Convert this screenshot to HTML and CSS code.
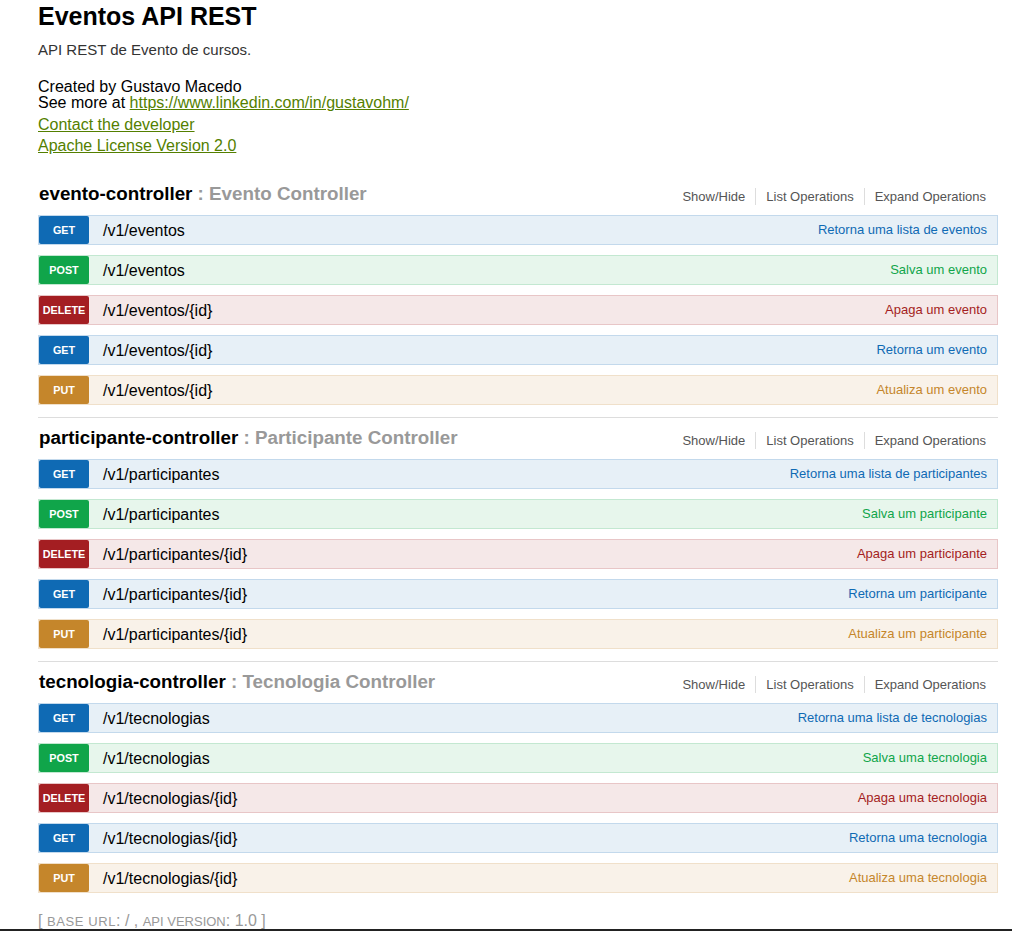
FILE: index.html
```html
<!DOCTYPE html>
<html lang="pt">
<head>
<meta charset="utf-8">
<title>Eventos API REST</title>
<link rel="stylesheet" href="styles.css">
</head>
<body>
<div class="wrap">
  <div class="info">
    <div class="info-title">Eventos API REST</div>
    <div class="info-description">API REST de Evento de cursos.</div>
    <div class="info-tos">Created by Gustavo Macedo<br>See more at <a href="#">https://www.linkedin.com/in/gustavohm/</a></div>
    <div class="info-link"><a href="#">Contact the developer</a></div>
    <div class="info-link"><a href="#">Apache License Version 2.0</a></div>
  </div>

  <ul class="resources">
    <li class="resource">
      <div class="res-heading">
        <h2><span class="res-name">evento-controller</span> : Evento Controller</h2>
        <ul class="options">
          <li>Show/Hide</li>
          <li>List Operations</li>
          <li>Expand Operations</li>
        </ul>
      </div>
      <ul class="endpoints">
        <li class="op get"><span class="method">GET</span><span class="path">/v1/eventos</span><span class="summary">Retorna uma lista de eventos</span></li>
        <li class="op post"><span class="method">POST</span><span class="path">/v1/eventos</span><span class="summary">Salva um evento</span></li>
        <li class="op delete"><span class="method">DELETE</span><span class="path">/v1/eventos/{id}</span><span class="summary">Apaga um evento</span></li>
        <li class="op get"><span class="method">GET</span><span class="path">/v1/eventos/{id}</span><span class="summary">Retorna um evento</span></li>
        <li class="op put"><span class="method">PUT</span><span class="path">/v1/eventos/{id}</span><span class="summary">Atualiza um evento</span></li>
      </ul>
    </li>
    <li class="resource">
      <div class="res-heading">
        <h2><span class="res-name">participante-controller</span> : Participante Controller</h2>
        <ul class="options">
          <li>Show/Hide</li>
          <li>List Operations</li>
          <li>Expand Operations</li>
        </ul>
      </div>
      <ul class="endpoints">
        <li class="op get"><span class="method">GET</span><span class="path">/v1/participantes</span><span class="summary">Retorna uma lista de participantes</span></li>
        <li class="op post"><span class="method">POST</span><span class="path">/v1/participantes</span><span class="summary">Salva um participante</span></li>
        <li class="op delete"><span class="method">DELETE</span><span class="path">/v1/participantes/{id}</span><span class="summary">Apaga um participante</span></li>
        <li class="op get"><span class="method">GET</span><span class="path">/v1/participantes/{id}</span><span class="summary">Retorna um participante</span></li>
        <li class="op put"><span class="method">PUT</span><span class="path">/v1/participantes/{id}</span><span class="summary">Atualiza um participante</span></li>
      </ul>
    </li>
    <li class="resource last">
      <div class="res-heading">
        <h2><span class="res-name">tecnologia-controller</span> : Tecnologia Controller</h2>
        <ul class="options">
          <li>Show/Hide</li>
          <li>List Operations</li>
          <li>Expand Operations</li>
        </ul>
      </div>
      <ul class="endpoints">
        <li class="op get"><span class="method">GET</span><span class="path">/v1/tecnologias</span><span class="summary">Retorna uma lista de tecnologias</span></li>
        <li class="op post"><span class="method">POST</span><span class="path">/v1/tecnologias</span><span class="summary">Salva uma tecnologia</span></li>
        <li class="op delete"><span class="method">DELETE</span><span class="path">/v1/tecnologias/{id}</span><span class="summary">Apaga uma tecnologia</span></li>
        <li class="op get"><span class="method">GET</span><span class="path">/v1/tecnologias/{id}</span><span class="summary">Retorna uma tecnologia</span></li>
        <li class="op put"><span class="method">PUT</span><span class="path">/v1/tecnologias/{id}</span><span class="summary">Atualiza uma tecnologia</span></li>
      </ul>
    </li>
  </ul>

  <div class="footer">[ <span class="sc sc-base">base url</span>: / , <span class="sc">api version</span>: 1.0 ]</div>
</div>
<div class="bottom-bar"></div>
</body>
</html>
```
FILE: styles.css
```css
html, body {
  margin: 0;
  padding: 0;
  background: #fff;
}
body {
  font-family: "Liberation Sans", Arial, sans-serif;
  color: #000;
}
ul {
  list-style: none;
  margin: 0;
  padding: 0;
}
.wrap {
  width: 960px;
  margin-left: 38px;
}

/* info */
.info-title {
  font-size: 25px;
  font-weight: bold;
  line-height: 33px;
}
.info-description {
  margin-top: 9px;
  font-size: 15px;
  line-height: 15px;
  color: #333;
}
.info-tos {
  margin-top: 22px;
  font-size: 16px;
  line-height: 16px;
}
.info-link {
  margin-top: 3px;
  font-size: 16px;
  line-height: 21px;
}
.info-link + .info-link {
  margin-top: 0;
}
.info a {
  color: #547f00;
  text-decoration: underline;
}
.resources {
  margin-top: 18px;
}

/* resources */
.resource {
  padding-bottom: 12px;
  border-bottom: 1px solid #ddd;
}
.resource.last {
  border-bottom: none;
}
.res-heading {
  display: flex;
  align-items: flex-start;
}
.res-heading h2 {
  flex: 1;
  margin: 0;
  padding: 10px 0 11px 1px;
  font-size: 18.8px;
  line-height: 20px;
  font-weight: bold;
  color: #999;
}
.res-name {
  color: #000;
}
.options {
  display: flex;
  margin: 14px 2px 0 0;
}
.options li {
  padding: 2px 10px;
  font-size: 13px;
  line-height: 13px;
  color: #555;
  border-right: 1px solid #ddd;
}
.options li:last-child {
  border-right: none;
}

/* operations */
.endpoints {
  display: flex;
  flex-direction: column;
  gap: 10px;
}
.op {
  display: flex;
  align-items: flex-start;
  height: 28px;
  border: 1px solid;
}
.method {
  width: 50px;
  height: 27px;
  padding-top: 1px;
  line-height: 27px;
  text-align: center;
  font-size: 10.8px;
  font-weight: bold;
  color: #fff;
  border-radius: 2px;
  text-transform: uppercase;
}
.path {
  margin-left: 14px;
  padding-top: 1px;
  font-size: 16px;
  line-height: 27px;
  color: #000;
}
.summary {
  margin-left: auto;
  margin-right: 10px;
  font-size: 13px;
  line-height: 27px;
}

.op.get { background: #e7f0f7; border-color: #c3d9ec; }
.op.get .method { background: #0f6ab4; }
.op.get .summary { color: #0f6ab4; }

.op.post { background: #e7f6ec; border-color: #c3e8d1; }
.op.post .method { background: #10a54a; }
.op.post .summary { color: #10a54a; }

.op.delete { background: #f5e8e8; border-color: #e8c6c7; }
.op.delete .method { background: #a41e22; }
.op.delete .summary { color: #a41e22; }

.op.put { background: #f9f2e9; border-color: #f0e0ca; }
.op.put .method { background: #c5862b; }
.op.put .summary { color: #c5862b; }

/* footer */
.footer {
  margin-top: 8px;
  font-size: 16px;
  line-height: 16px;
  color: #999;
}
.sc {
  font-size: 13px;
  text-transform: uppercase;
}
.sc-base {
  letter-spacing: 0.6px;
}
.bottom-bar {
  position: fixed;
  left: 0;
  right: 0;
  bottom: 0;
  height: 2px;
  background: #222;
}
```
